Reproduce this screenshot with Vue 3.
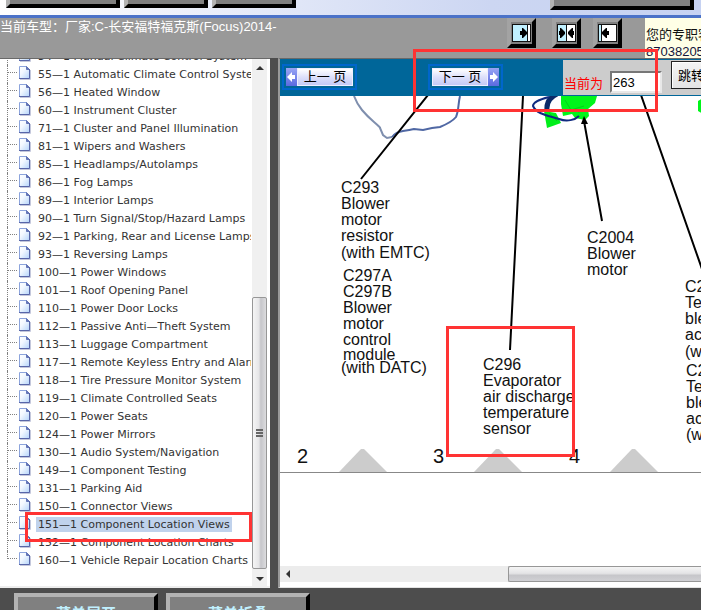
<script setup>
import { ref } from 'vue'

const page = ref('263')
const selected = ref('151')

const sections = [
  ['54', 'Manual Climate Control System'],
  ['55', 'Automatic Climate Control System'],
  ['56', 'Heated Window'],
  ['60', 'Instrument Cluster'],
  ['71', 'Cluster and Panel Illumination'],
  ['81', 'Wipers and Washers'],
  ['85', 'Headlamps/Autolamps'],
  ['86', 'Fog Lamps'],
  ['89', 'Interior Lamps'],
  ['90', 'Turn Signal/Stop/Hazard Lamps'],
  ['92', 'Parking, Rear and License Lamps'],
  ['93', 'Reversing Lamps'],
  ['100', 'Power Windows'],
  ['101', 'Roof Opening Panel'],
  ['110', 'Power Door Locks'],
  ['112', 'Passive Anti—Theft System'],
  ['113', 'Luggage Compartment'],
  ['117', 'Remote Keyless Entry and Alarm'],
  ['118', 'Tire Pressure Monitor System'],
  ['119', 'Climate Controlled Seats'],
  ['120', 'Power Seats'],
  ['124', 'Power Mirrors'],
  ['130', 'Audio System/Navigation'],
  ['149', 'Component Testing'],
  ['131', 'Parking Aid'],
  ['150', 'Connector Views'],
  ['151', 'Component Location Views'],
  ['152', 'Component Location Charts'],
  ['160', 'Vehicle Repair Location Charts']
]

const callouts = [
  { x: 341, lines: [['C293', 193], ['Blower', 209], ['motor', 225], ['resistor', 241], ['(with EMTC)', 258]] },
  { x: 343, lines: [['C297A', 281], ['C297B', 297], ['Blower', 313], ['motor', 329], ['control', 345], ['module', 360]] },
  { x: 341, lines: [['(with DATC)', 373]] },
  { x: 587, lines: [['C2004', 243], ['Blower', 259], ['motor', 275]] },
  { x: 483, lines: [['C296', 370], ['Evaporator', 386], ['air discharge', 402], ['temperature', 418], ['sensor', 434]] },
  { x: 685, lines: [['C2', 292], ['Temp', 308], ['blend', 324], ['actuator', 340], ['(with', 357]] },
  { x: 686, lines: [['C2', 376], ['Temp', 392], ['blend', 408], ['actuator', 424], ['(with', 440]] }
]

const marks = [['2', 297, 363], ['3', 433, 498], ['4', 569, 634]]
</script>

<template>
  <div class="app">
    <header class="top">
      <button class="bevel wide" aria-label="菜单一"></button>
      <button class="bevel" aria-label="菜单二"></button>
      <button class="bevel" aria-label="菜单三"></button>
      <button class="bevel last" aria-label="菜单四"></button>
    </header>

    <div class="info">
      <p class="vehicle">当前车型：厂家:C-长安福特福克斯(Focus)2014-</p>
      <div class="tools">
        <button class="tool" aria-label="展开左栏">
          <svg width="19" height="18"><rect x=".5" y=".5" width="18" height="17" fill="#fff" stroke="#111"/><rect x="1" y="1" width="14" height="16" fill="#c0f0ff"/><path d="M15.500 1v16" stroke="#111"/><path d="M8 7h2V4h1l4 4v2l-4 4h-1v-3H8z"/></svg>
        </button>
        <button class="tool" aria-label="平分">
          <svg width="19" height="18"><rect x=".5" y=".5" width="18" height="17" fill="#fff" stroke="#111"/><rect x="1" y="1" width="8" height="16" fill="#c0f0ff"/><path d="M9.500 1v16" stroke="#111"/><path d="M2 7h1V4h1l4 4v2l-4 4H3v-3H2zM17 7h-1V4h-1l-4 4v2l4 4h1v-3h1z"/></svg>
        </button>
        <button class="tool" aria-label="收起左栏">
          <svg width="19" height="18"><rect x=".5" y=".5" width="18" height="17" fill="#fff" stroke="#111"/><rect x="1" y="1" width="2" height="16" fill="#c0f0ff"/><path d="M3.500 1v16" stroke="#111"/><path d="M11 7H9V4H8L4 8v2l4 4h1v-3h2z"/></svg>
        </button>
      </div>
      <div class="service"><p>您的专职客服</p><p class="phone">87038205</p></div>
    </div>

    <main class="panes">
      <nav class="tree">
        <ul class="list">
          <li v-for="[no, name] in sections" :key="no">
            <span class="branch"></span>
            <svg class="doc" width="14" height="16" viewBox="0 0 14 16">
              <defs><linearGradient id="sheet" x1="0" y1="0" x2="1" y2="1"><stop offset="0" stop-color="#fff"/><stop offset=".4" stop-color="#f2f8ff"/><stop offset="1" stop-color="#b4d4fa"/></linearGradient></defs>
              <path d="M1.500 1.500h7l3 3v9h-10z" fill="url(#sheet)" stroke="#8ca4dc"/>
              <path d="M8.500 1.500v3h3z" fill="#6577b8" stroke="#6577b8"/>
              <path d="M11.500 4v9.500H1" fill="none" stroke="#5866a8"/>
              <path d="M12.500 5v9.500H2" fill="none" stroke="#c4c8dc"/>
            </svg>
            <a href="#" :class="{ on: no === selected }" @click.prevent="selected = no">{{ no }}—1 {{ name }}</a>
          </li>
        </ul>
        <div class="vbar">
          <svg class="arrow" width="15" height="16"><path d="M4 11l4-4 4 4z" fill="#333"/></svg>
          <div class="vtrack"></div>
          <div class="vthumb"><i></i><i></i><i></i></div>
          <svg class="arrow" width="15" height="17"><path d="M4 8h8l-4 4z" fill="#333"/></svg>
        </div>
      </nav>

      <div class="splitter"></div>

      <section class="viewer">
        <div class="bar">
          <div class="pager">
            <button class="page"><svg class="cap" width="11" height="18"><path d="M1 9l5-5v3h3v4H6v3z" fill="#fff"/></svg><span>上一 页</span></button>
            <button class="page"><span>下一 页</span><svg class="cap" width="11" height="18"><path d="M10 9L5 4v3H2v4h3v3z" fill="#fff"/></svg></button>
          </div>
          <div class="goto">
            <label for="page">当前为</label>
            <input id="page" v-model="page" type="text">
            <button class="jump">跳转</button>
          </div>
        </div>

        <div class="sheet">
          <svg class="diagram" width="600" height="378" viewBox="280 96 600 378">
            <path d="M354 96Q357 104 362 110T374 122 380 128L383 135 387 138 392 137" fill="none" stroke="#7f8fae" stroke-width="2"/>
            <path d="M392 137Q396 132 403 131T414 129L423 130 432 128 440 127Q452 122 456 117C459 110 458 104 460 96" fill="none" stroke="#5068a4" stroke-width="2"/>
            <path d="M544 111L556 113 561 123 547 128z" fill="#00ee1a"/>
            <path d="M561 96H597L595 103 588 109 589 116 585 120 575 118 572 114 563 116 561 104z" fill="#00f51a"/>
            <path d="M565 100L571 110 584 106M578 112L588 110M549 113L557 121" fill="none" stroke="#00d018"/>
            <path d="M557 94Q546 99 547 110" fill="none" stroke="#0b2a68" stroke-width="5"/>
            <path d="M549 97Q533 101 533 106C537 115 551 116 559 119S575 120 579 116" fill="none" stroke="#102b80" stroke-width="2"/>
            <path d="M698 101L703 98V114L698 111z" fill="#00f51a"/>
            <g stroke="#000" stroke-width="2"><path d="M428 95L361 179M523 96L510 350M641 95L702 269M584 121L602 221"/></g>
            <path d="M584 116L581 124H588z"/>
            <g class="callouts">
              <template v-for="(c, i) in callouts" :key="i">
                <text v-for="[t, y] in c.lines" :key="y" :x="c.x" :y="y">{{ t }}</text>
              </template>
            </g>
            <g v-for="[n, x, cx] in marks" :key="n">
              <path :d="`M${cx - 24} 472L${cx - 2} 449H${cx + 1}L${cx + 24} 472z`" fill="#ccc"/>
              <text class="mark" :x="x" :y="463">{{ n }}</text>
            </g>
            <path d="M280 472.500H880" stroke="#888"/>
          </svg>
        </div>

        <div class="hbar">
          <svg width="17" height="15"><path d="M10 4v8L6 8z" fill="#333"/></svg>
          <div class="htrack"></div>
          <div class="hthumb"></div>
        </div>
      </section>
    </main>

    <footer class="foot">
      <button class="bevel action">菜单展开</button>
      <button class="bevel action">菜单折叠</button>
    </footer>

    <div class="note note-pager"></div>
    <div class="note note-callout"></div>
    <div class="note note-tree"></div>
  </div>
</template>

<style>
body { margin: 0; overflow: hidden; }
</style>

<style scoped>
* { box-sizing: border-box; }
p, ul { margin: 0; padding: 0; }
svg { display: block; flex: none; }
button { font: inherit; padding: 0; border-radius: 0; }

.app {
  position: relative;
  display: flex;
  flex-direction: column;
  height: 100vh;
  overflow: hidden;
  background: #4d4d4d;
  font: 13px/17px "Liberation Sans", "Noto Sans CJK SC", sans-serif;
}

.top {
  display: flex;
  align-items: flex-end;
  gap: 4px;
  flex: none;
  height: 18px;
  padding: 0 7px 10px 6px;
  background: linear-gradient(90deg, #fff, #ccd6f2 70%, #c6d2f2);
  border-bottom: 3px solid #4b72c8;
}
.bevel {
  flex: none;
  width: 84px;
  height: 30px;
  background: #808080;
  border: 4px solid;
  border-color: #b3b3b3 #000 #000 #b3b3b3;
}
.top .bevel { margin-bottom: -3px; }
.wide { width: 114px; }
.top .last { width: 144px; margin-left: auto; margin-bottom: -5px; }

.info {
  display: flex;
  flex: none;
  height: 40px;
  background: #999;
}
.vehicle { flex: 1; color: #fff; white-space: nowrap; }
.tools { display: flex; gap: 12px; padding-right: 23px; }
.tool {
  display: grid;
  place-items: center;
  width: 29px;
  height: 30px;
  background: #808080;
  border: 4px solid;
  border-color: #a3a3a3 #000 #000 #a3a3a3;
}
.tool:first-child { margin-right: 4px; }
.service {
  width: 56px;
  padding: 8px 0 0 1px;
  overflow: hidden;
  background: #ffffe6;
  color: #111;
  white-space: nowrap;
}
.phone { color: #14143c; }

.panes { display: flex; flex: 1; min-height: 0; }

.tree {
  display: flex;
  width: 270px;
  flex: none;
  overflow: hidden;
  background: #fff;
  border-top: 1px solid #696969;
  border-bottom: 2px solid #eee;
}
.list {
  flex: 1;
  min-width: 0;
  margin-top: -12px;
  margin-right: 1px;
  overflow: hidden;
  list-style: none;
  font: 11px/18px "DejaVu Sans", sans-serif;
}
li {
  display: flex;
  align-items: flex-start;
  height: 18px;
  margin-left: 7px;
  white-space: nowrap;
  border-left: 1px dotted #808080;
}
li:last-child { height: 8px; }
.branch { width: 9px; flex: none; margin-top: 7px; border-top: 1px dotted #808080; }
.doc { margin-left: 1px; }
li a {
  margin: 2px 0 0 4px;
  padding: 0 2px;
  line-height: 15px;
  color: #333;
  text-decoration: none;
}
li a.on { background: #c0d2ec; }

.vbar {
  display: flex;
  flex-direction: column;
  width: 15px;
  margin-right: 3px;
  background: #f0f0f0;
}
.vtrack { flex: 223; }
.vthumb {
  display: flex;
  flex: 271;
  flex-direction: column;
  align-items: center;
  justify-content: center;
  gap: 1px;
  background: linear-gradient(90deg, #f5f5f5, #e6e6e8 45%, #c6c6ca 60%, #dcdcde);
  border: 1px solid #979797;
  border-radius: 2px;
}
.vthumb i { width: 7px; height: 2px; background: #666; }

.splitter { width: 8px; flex: none; background: #4d4d4d; }

.viewer {
  display: flex;
  flex: 1;
  flex-direction: column;
  min-width: 0;
  background: #fff;
  border-top: 1px solid #696969;
  border-left: 2px solid #999;
  border-bottom: 1px solid #e3e3e3;
}
.bar { display: flex; flex: none; height: 37px; background: #069; }
.pager {
  display: flex;
  align-items: center;
  gap: 71px;
  width: 283px;
  flex: none;
  padding: 0 0 1px 2px;
}
.page {
  display: flex;
  align-items: center;
  width: 75px;
  height: 26px;
  padding: 0 2px;
  background: #069;
  border: 2px solid #06c;
  line-height: 16px;
  color: #000;
}
.page span {
  flex: 1;
  height: 18px;
  background: linear-gradient(#fff, #dde0fa 50%, #c5caf6);
  border: 1px solid #eef;
  white-space: nowrap;
}
.cap { background: linear-gradient(#98a4f4, #5a6ae0); }
.goto {
  display: flex;
  flex: 1;
  min-width: 0;
  overflow: hidden;
  align-items: flex-start;
  margin: 1px 0;
  padding-left: 1px;
  background: #ccc;
  white-space: nowrap;
}
.goto label { width: 46px; flex: none; padding-top: 15px; color: #f00; }
.goto input {
  width: 52px;
  height: 22px;
  flex: none;
  margin-top: 11px;
  padding: 0 1px;
  border: 2px solid;
  border-color: #777 #e8e8e8 #e8e8e8 #777;
  background: #fff;
  font: inherit;
}
.jump {
  width: 40px;
  height: 28px;
  flex: none;
  margin: 1px 0 0 9px;
  background: linear-gradient(#f4f4f4, #e4e4e4);
  border: 1px solid #222;
  box-shadow: inset 1px 1px #fff;
  color: #000;
}

.sheet { flex: 1; min-height: 0; overflow: hidden; }
.callouts { font-size: 16px; fill: #111; }
.mark { font-size: 20px; fill: #111; }

.hbar {
  display: flex;
  flex: none;
  height: 16px;
  margin-bottom: 5px;
  background: #ececec;
}
.htrack { flex: 212; }
.hthumb {
  flex: 193;
  background: linear-gradient(#f5f5f5, #e4e4e6 45%, #c6c6ca 60%, #d0d0d4);
  border: 1px solid #979797;
  border-right: 0;
  border-radius: 2px 0 0 2px;
}

.foot {
  display: flex;
  gap: 8px;
  flex: none;
  height: 22px;
  padding: 5px 14px 0;
}
.action {
  width: 144px;
  height: 40px;
  color: #c0f0ff;
  font-size: 15px;
  font-weight: bold;
}

.note { position: absolute; border: 3px solid #f33; pointer-events: none; }
.note-pager { left: 413px; top: 49px; width: 245px; height: 63px; }
.note-callout { left: 446px; top: 326px; width: 129px; height: 131px; }
.note-tree { left: 25px; top: 512px; width: 227px; height: 30px; }
</style>
